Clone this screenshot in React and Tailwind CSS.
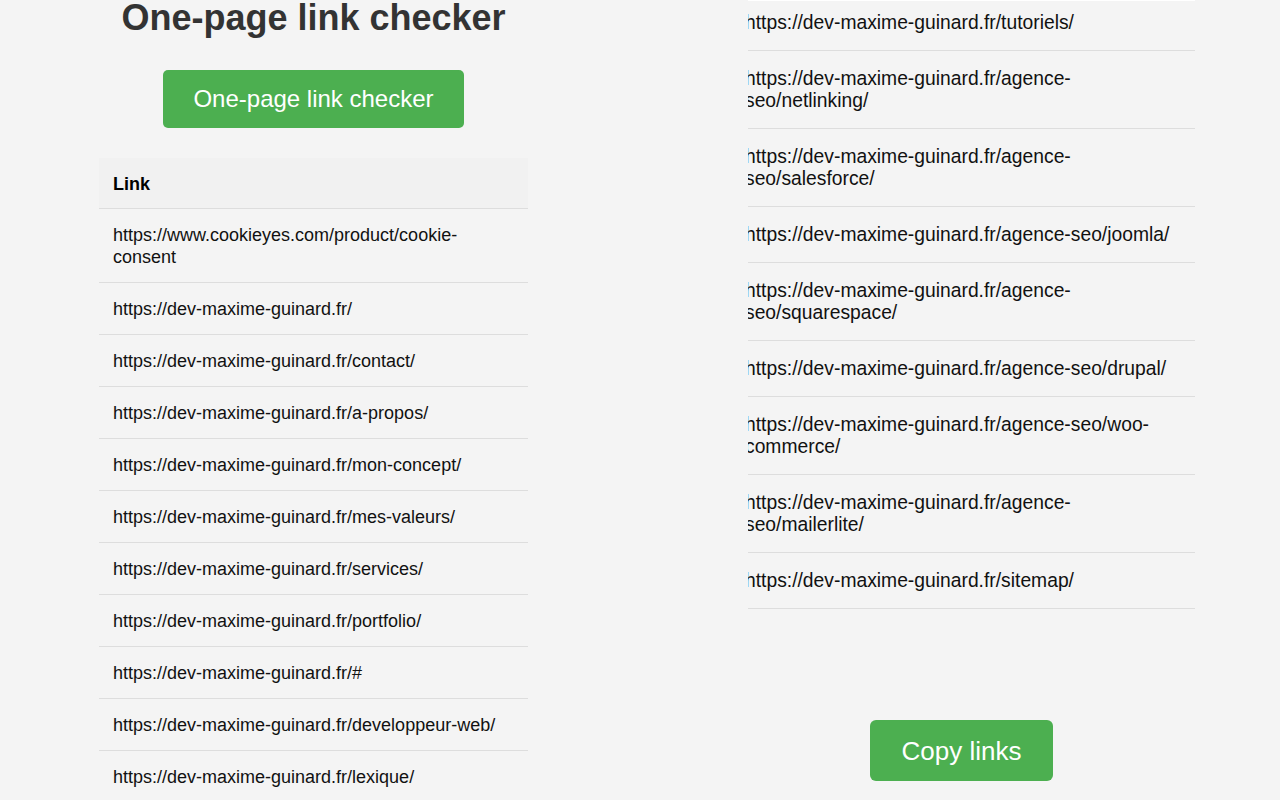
import { useState } from 'react'

// ── Data ──────────────────────────────────────────────────────────────────────

const LEFT_LINKS = [
  'https://www.cookieyes.com/product/cookie-consent',
  'https://dev-maxime-guinard.fr/',
  'https://dev-maxime-guinard.fr/contact/',
  'https://dev-maxime-guinard.fr/a-propos/',
  'https://dev-maxime-guinard.fr/mon-concept/',
  'https://dev-maxime-guinard.fr/mes-valeurs/',
  'https://dev-maxime-guinard.fr/services/',
  'https://dev-maxime-guinard.fr/portfolio/',
  'https://dev-maxime-guinard.fr/#',
  'https://dev-maxime-guinard.fr/developpeur-web/',
  'https://dev-maxime-guinard.fr/lexique/',
]

const RIGHT_LINKS = [
  'https://dev-maxime-guinard.fr/tutoriels/',
  'https://dev-maxime-guinard.fr/agence-seo/netlinking/',
  'https://dev-maxime-guinard.fr/agence-seo/salesforce/',
  'https://dev-maxime-guinard.fr/agence-seo/joomla/',
  'https://dev-maxime-guinard.fr/agence-seo/squarespace/',
  'https://dev-maxime-guinard.fr/agence-seo/drupal/',
  'https://dev-maxime-guinard.fr/agence-seo/woo-commerce/',
  'https://dev-maxime-guinard.fr/agence-seo/mailerlite/',
  'https://dev-maxime-guinard.fr/sitemap/',
]

// ── Main page ─────────────────────────────────────────────────────────────────

export default function App() {
  const [copied, setCopied] = useState(false)

  return (
    <div
      className="flex h-[800px] overflow-hidden bg-[#f4f4f4] text-[#111]"
      style={{ fontFamily: '"Liberation Sans", Arial, sans-serif' }}
    >
      {/* Left: checker + table */}
      <div className="w-[640px] shrink-0 pr-[13px] flex flex-col items-center">
        <h1 className="text-[36px] leading-[36px] font-bold text-[#333]">One-page link checker</h1>
        <button className="mt-[34px] px-[30px] py-[15px] rounded-[5px] bg-[#4caf50] text-white text-[24px] leading-[28px]">
          One-page link checker
        </button>

        <table className="mt-[30px] w-[429px] text-left text-[18px] leading-[22px] border-collapse">
          <thead>
            <tr className="bg-[#f1f1f1] border-b border-[#dddddd]">
              <th className="pl-[14px] pr-[14px] pt-[15px] pb-[13px] font-bold text-black">Link</th>
            </tr>
          </thead>
          <tbody>
            {LEFT_LINKS.map((l) => (
              <tr key={l} className="border-b border-[#dddddd]">
                <td className="pl-[14px] pr-[14px] pt-[15px] pb-[14px] break-words">{l}</td>
              </tr>
            ))}
          </tbody>
        </table>
      </div>

      {/* Right: scrolled continuation + copy */}
      <div className="w-[640px] shrink-0 flex flex-col">
        <div className="ml-[108px] w-[447px] h-[610px] overflow-hidden border-t border-white">
          <div className="-mt-[6px] text-[19.3px] leading-[22px]">
            {RIGHT_LINKS.map((l) => (
              <div key={l} className="border-b border-[#dddddd] pt-[17px] pb-[16px] pr-[16px]">
                <div className="-ml-[3px]">{l}</div>
              </div>
            ))}
          </div>
        </div>
        <div className="flex justify-center pl-[3px] mt-[110px]">
          <button
            onClick={() => setCopied(true)}
            className="px-[32px] py-[15.5px] rounded-[6px] bg-[#4caf50] text-white text-[26px] leading-[30px]"
          >
            {copied ? 'Copied!' : 'Copy links'}
          </button>
        </div>
      </div>
    </div>
  )
}
